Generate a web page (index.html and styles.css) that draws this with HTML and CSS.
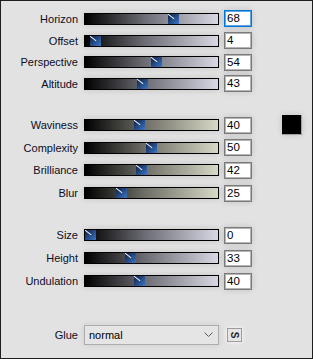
FILE: index.html
```html
<!DOCTYPE html>
<html lang="en">
<head>
  <meta charset="UTF-8">
  <title>Wave settings</title>
  <link rel="stylesheet" href="styles.css">
</head>
<body>

  <div class="panel">

    <div class="group g1">
      <div class="row">
        <span class="name">Horizon</span>
        <div class="track cool"><span class="thumb" style="left:83px"></span></div>
        <div class="value active">68</div>
      </div>
      <div class="row">
        <span class="name">Offset</span>
        <div class="track cool"><span class="thumb" style="left:5px"></span></div>
        <div class="value">4</div>
      </div>
      <div class="row">
        <span class="name">Perspective</span>
        <div class="track cool"><span class="thumb" style="left:66px"></span></div>
        <div class="value">54</div>
      </div>
      <div class="row">
        <span class="name">Altitude</span>
        <div class="track cool"><span class="thumb" style="left:52px"></span></div>
        <div class="value">43</div>
      </div>
    </div>

    <div class="group g2">
      <div class="row">
        <span class="name">Waviness</span>
        <div class="track warm"><span class="thumb" style="left:49px"></span></div>
        <div class="value">40</div>
        <div class="swatch"></div>
      </div>
      <div class="row">
        <span class="name">Complexity</span>
        <div class="track warm"><span class="thumb" style="left:61px"></span></div>
        <div class="value">50</div>
      </div>
      <div class="row">
        <span class="name">Brilliance</span>
        <div class="track warm"><span class="thumb" style="left:51px"></span></div>
        <div class="value">42</div>
      </div>
      <div class="row">
        <span class="name">Blur</span>
        <div class="track warm"><span class="thumb" style="left:31px"></span></div>
        <div class="value">25</div>
      </div>
    </div>

    <div class="group g3">
      <div class="row">
        <span class="name">Size</span>
        <div class="track cool"><span class="thumb" style="left:0px"></span></div>
        <div class="value">0</div>
      </div>
      <div class="row">
        <span class="name">Height</span>
        <div class="track cool"><span class="thumb" style="left:40px"></span></div>
        <div class="value">33</div>
      </div>
      <div class="row">
        <span class="name">Undulation</span>
        <div class="track cool"><span class="thumb" style="left:49px"></span></div>
        <div class="value">40</div>
      </div>
    </div>

    <div class="glue-row">
      <span class="name">Glue</span>
      <div class="select">
        <span>normal</span>
        <svg width="9" height="6" viewBox="0 0 9 6"><polyline points="0.5,0.5 4.5,4.5 8.5,0.5" fill="none" stroke="#5a5a5a" stroke-width="1"/></svg>
      </div>
      <div class="s-btn"><span>S</span></div>
    </div>

  </div>

</body>
</html>
```

FILE: styles.css
```css
body {
  margin: 0;
  font-family: "Liberation Sans", Arial, sans-serif;
  font-size: 11px;
  color: #0c0c24;
}

.panel {
  box-sizing: border-box;
  width: 313px;
  height: 359px;
  border: 1px solid #1e1e1e;
  background: #e2e2e2;
}

.group {
  margin-top: 19px;
}

.g1 {
  margin-top: 7px;
}

.row {
  display: flex;
  align-items: center;
  height: 22.7px;
}

.g1 .row {
  height: 21.7px;
}

.g3 .row {
  height: 23px;
}

.name {
  width: 77px;
  margin-right: 6px;
  text-align: right;
}

.track {
  position: relative;
  box-sizing: border-box;
  width: 135px;
  height: 12px;
  border: 1px solid #000;
  box-shadow: 0 0 6px rgba(0,0,0,0.14);
}

.track.cool {
  background: linear-gradient(to right, #000 0%, #6c6c74 45%, #d8d8e4 100%);
}

.track.warm {
  background: linear-gradient(to right, #000 0%, #6e6e66 45%, #d8d8c6 100%);
}

.thumb {
  position: absolute;
  top: 0;
  width: 11px;
  height: 10px;
  background: linear-gradient(135deg, #102040 0%, #22467e 45%, #3a78c8 100%);
  overflow: hidden;
}

.thumb::before {
  content: '';
  position: absolute;
  left: -1px;
  top: 2px;
  width: 8px;
  height: 1px;
  background: #f2f6fc;
  transform: rotate(38deg);
}

.value {
  box-sizing: border-box;
  width: 28px;
  height: 17px;
  margin-left: 5px;
  padding: 1px 0 0 2px;
  border: 1px solid #7a7a7a;
  box-shadow: inset 0 0 0 1px #b4b4b4, 0 0 6px rgba(0,0,0,0.14);
  background: #fff;
  color: #000;
  font-size: 11.5px;
  line-height: 13px;
}

.value.active {
  border-color: #0078d7;
  box-shadow: inset 0 0 0 1px #5fa6e4, 0 0 6px rgba(0,0,0,0.14);
}

.swatch {
  box-sizing: border-box;
  width: 20px;
  height: 20px;
  margin-left: 30px;
  background: #000;
  border-right: 1px solid #a0a0a0;
  border-bottom: 1px solid #a0a0a0;
  box-shadow: 0 0 6px rgba(0,0,0,0.14);
}

.glue-row {
  display: flex;
  align-items: center;
  height: 20px;
  margin-top: 32px;
}

.select {
  box-sizing: border-box;
  display: flex;
  align-items: center;
  justify-content: space-between;
  width: 135px;
  height: 20px;
  padding: 0 5px 0 4px;
  border: 1px solid #adadad;
  background: #e5e5e5;
  color: #000;
  box-shadow: 0 0 6px rgba(0,0,0,0.1);
}

.select svg {
  display: block;
  margin-top: 1px;
}

.s-btn {
  box-sizing: border-box;
  display: flex;
  align-items: center;
  justify-content: center;
  width: 15px;
  height: 14px;
  margin-left: 8px;
  border: 1px solid #9c9c9c;
  background: #e6e6e6;
  box-shadow: 0 0 4px rgba(255,255,255,0.9);
}

.s-btn span {
  display: block;
  transform: rotate(90deg);
  font-size: 10px;
  font-weight: bold;
  line-height: 10px;
  color: #222;
}
```
